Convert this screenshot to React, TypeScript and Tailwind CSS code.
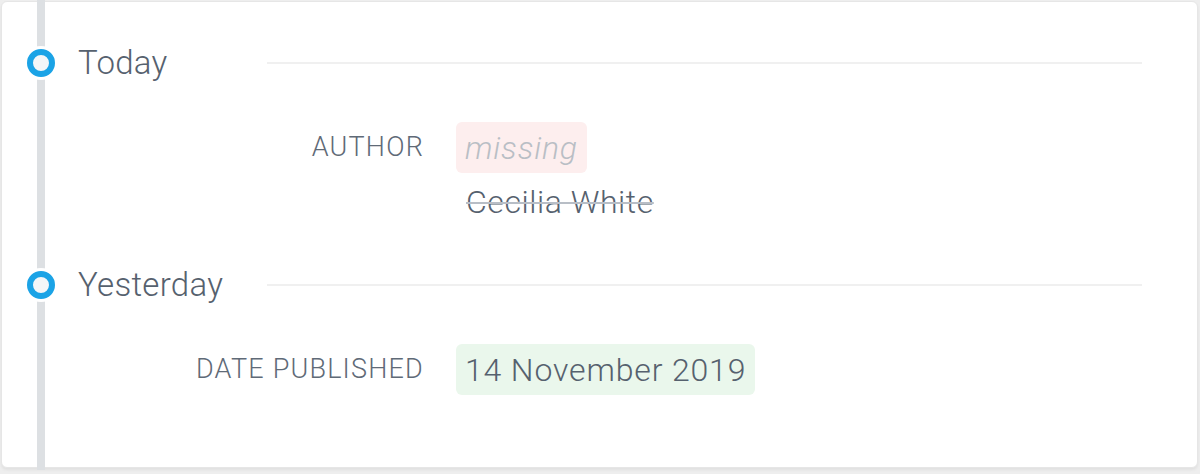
import React from 'react';

type Change = {
  label: string;
  value: string;
  previous?: string;
  kind: 'missing' | 'added';
};

type Day = {
  title: string;
  changes: Change[];
};

const days: Day[] = [
  {
    title: 'Today',
    changes: [{ label: 'AUTHOR', value: 'missing', previous: 'Cecilia White', kind: 'missing' }],
  },
  {
    title: 'Yesterday',
    changes: [{ label: 'DATE PUBLISHED', value: '14 November 2019', kind: 'added' }],
  },
];

const Dot: React.FC = () => (
  <div className="relative z-10 flex h-[34px] w-[34px] items-center justify-center rounded-full bg-white">
    <div className="h-[28px] w-[28px] rounded-full border-[6px] border-[#1ba3e6] bg-[#f4f6f8]" />
  </div>
);

const ChangeRow: React.FC<{ change: Change }> = ({ change }) => (
  <div className="flex items-start">
    <div className="flex h-[51px] w-[422px] items-center justify-end text-right text-[27px] font-light tracking-[1.2px] text-[#5f6a77]">
      {change.label}
    </div>
    <div className="ml-[32px] flex flex-col items-start">
      {change.kind === 'missing' ? (
        <div className="flex h-[51px] items-center rounded-[6px] bg-[#fdeeee] px-[9px] text-[32px] font-light italic tracking-[0.8px] text-[#b9bec5]">
          {change.value}
        </div>
      ) : (
        <div className="flex h-[51px] items-center rounded-[6px] bg-[#eaf7ec] px-[9px] text-[32px] font-light tracking-[0.85px] text-[#56616e]">
          {change.value}
        </div>
      )}
      {change.previous && (
        <div className="mt-[9px] pl-[10px] text-[32px] font-light leading-[40px] tracking-[0.55px] text-[#56616e] line-through decoration-[#b8bec6] decoration-[2px]">
          {change.previous}
        </div>
      )}
    </div>
  </div>
);

const App: React.FC = () => {
  return (
    <div className="h-[474px] w-[1200px] bg-[#eeeeee] pl-[1px] pt-[1px] pr-[2px] font-['Roboto',sans-serif]">
      <div className="relative h-[467px] rounded-[6px] border border-[#e6e6e6] bg-white shadow-[0_2px_3px_rgba(0,0,0,0.06)]">
        <div className="absolute left-[35px] top-[-2px] bottom-[-3px] w-[8px] bg-[#dde0e3]" />
        <div className="flex flex-col pt-[38px]">
          {days.map((day, i) => (
            <div key={day.title} className={i > 0 ? 'mt-[40px]' : ''}>
              <div className="flex h-[46px] items-center pl-[22px] pr-[55px]">
                <Dot />
                <div className="ml-[20px] w-[189px] text-[33px] font-light tracking-[0.3px] text-[#56616e]">{day.title}</div>
                <div className="h-[2px] flex-1 bg-[#f0f0f0]" />
              </div>
              <div className="mt-[36px] flex flex-col">
                {day.changes.map((c) => (
                  <ChangeRow key={c.label} change={c} />
                ))}
              </div>
            </div>
          ))}
        </div>
      </div>
    </div>
  );
};

export default App;
